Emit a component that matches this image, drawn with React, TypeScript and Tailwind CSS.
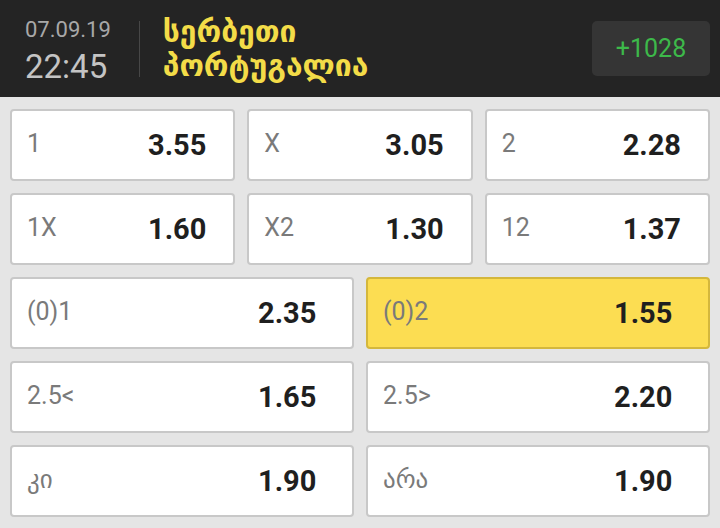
import React from "react";

type Odd = { label: string; value: string; active?: boolean };

const rowsThree: Odd[][] = [
  [
    { label: "1", value: "3.55" },
    { label: "X", value: "3.05" },
    { label: "2", value: "2.28" },
  ],
  [
    { label: "1X", value: "1.60" },
    { label: "X2", value: "1.30" },
    { label: "12", value: "1.37" },
  ],
];

const rowsTwo: Odd[][] = [
  [
    { label: "(0)1", value: "2.35" },
    { label: "(0)2", value: "1.55", active: true },
  ],
  [
    { label: "2.5<", value: "1.65" },
    { label: "2.5>", value: "2.20" },
  ],
  [
    { label: "კი", value: "1.90" },
    { label: "არა", value: "1.90" },
  ],
];

function OddCell({ odd, wide }: { odd: Odd; wide?: boolean }) {
  return (
    <div
      className={
        "flex h-[72px] items-center rounded-[4px] border-2 pl-[15px] " +
        (odd.active
          ? "border-[#d4b73c] bg-[#fcdd52]"
          : "border-[#c8c8c8] bg-white")
      }
    >
      <span
        className={
          "text-[25px] leading-none text-[#7a7a7a] -mt-[3px] " +
          (wide ? "w-[231px]" : "w-[121px]")
        }
      >
        {odd.label}
      </span>
      <span className="text-[29px] font-bold leading-none text-[#1f1f1f]">
        {odd.value}
      </span>
    </div>
  );
}

export default function App() {
  return (
    <div
      className="h-[528px] w-[720px] overflow-hidden bg-[#e5e5e5]"
      style={{ fontFamily: "Roboto, 'DejaVu Sans', sans-serif" }}
    >
      <div className="flex h-[97px] items-center bg-[#242424] pl-[25px] pr-[10px]">
        <div className="flex flex-col pt-[4px]">
          <span className="text-[22px] leading-none text-[#a8a8a8]">07.09.19</span>
          <span className="mt-[9px] text-[33px] leading-none text-[#c4c4c4]">22:45</span>
        </div>
        <div className="ml-[28px] h-[56px] w-px bg-[#474747]" />
        <div className="ml-[23px] flex flex-1 flex-col font-bold text-[#f3dc48]">
          <span className="text-[30px] leading-[34px]" style={{ fontFamily: "'DejaVu Sans', sans-serif" }}>
            სერბეთი
          </span>
          <span className="text-[30px] leading-[34px]" style={{ fontFamily: "'DejaVu Sans', sans-serif" }}>
            პორტუგალია
          </span>
        </div>
        <div className="flex h-[55px] w-[118px] items-center justify-center rounded-[5px] bg-[#353535] text-[25px] text-[#3db94a]">
          +1028
        </div>
      </div>
      <div className="flex flex-col gap-[12px] px-[10px] pt-[12px]">
        {rowsThree.map((row, i) => (
          <div key={i} className="grid grid-cols-3 gap-[12px]">
            {row.map((odd) => (
              <OddCell key={odd.label} odd={odd} />
            ))}
          </div>
        ))}
        {rowsTwo.map((row, i) => (
          <div key={i} className="grid grid-cols-2 gap-[12px]">
            {row.map((odd) => (
              <OddCell key={odd.label} odd={odd} wide />
            ))}
          </div>
        ))}
      </div>
    </div>
  );
}
